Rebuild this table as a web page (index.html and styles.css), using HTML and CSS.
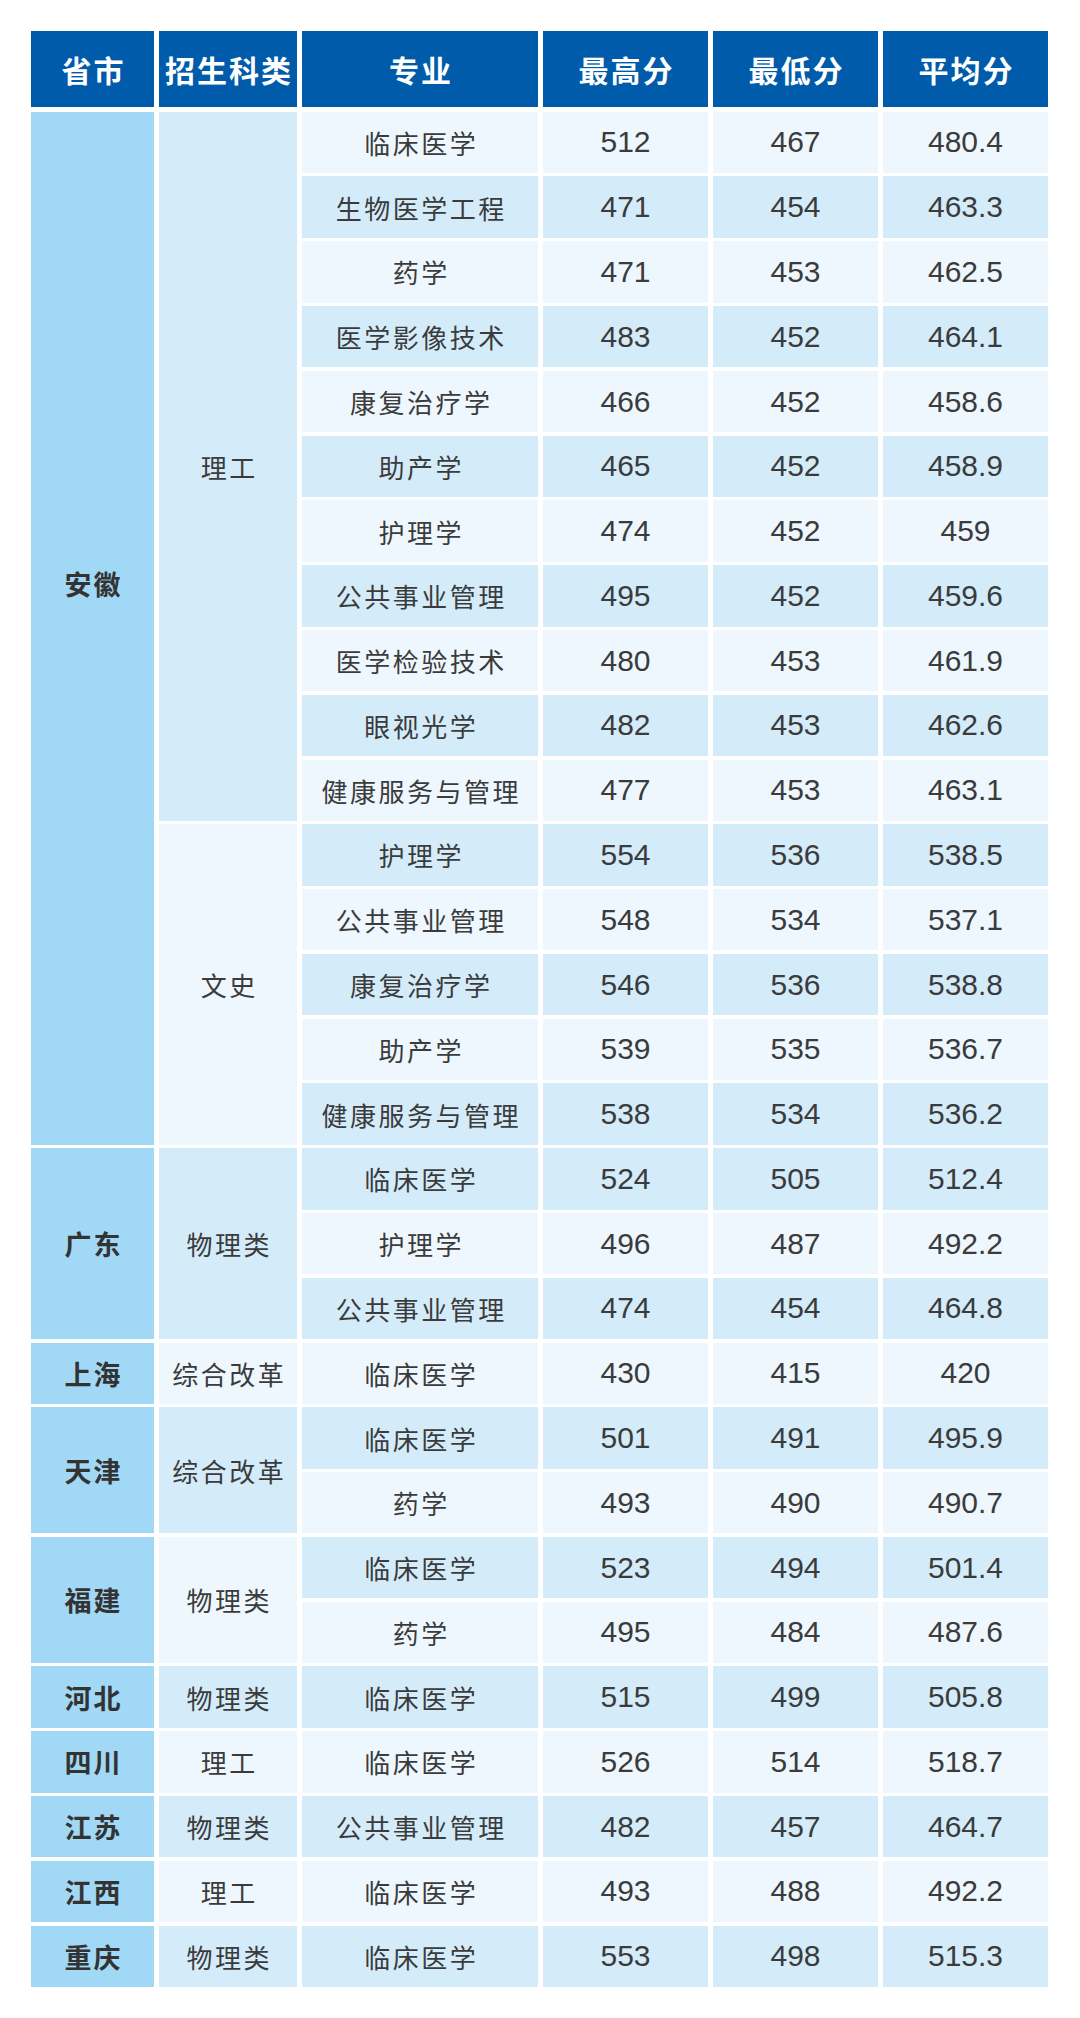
FILE: index.html
```html
<!DOCTYPE html>
<html lang="zh-CN">
<head>
<meta charset="utf-8">
<title>录取分数</title>
<link rel="stylesheet" href="styles.css">
</head>
<body>
<div class="sheet">
  <div class="head">
    <div class="hc">省市</div>
    <div class="hc">招生科类</div>
    <div class="hc">专业</div>
    <div class="hc">最高分</div>
    <div class="hc">最低分</div>
    <div class="hc">平均分</div>
  </div>
  <div class="body">
    <div class="prov s16 raised">安徽</div>
    <div class="cat m s11">理工</div>
    <div class="c t l">临床医学</div><div class="c l">512</div><div class="c l">467</div><div class="c l">480.4</div>
    <div class="c t m">生物医学工程</div><div class="c m">471</div><div class="c m">454</div><div class="c m">463.3</div>
    <div class="c t l">药学</div><div class="c l">471</div><div class="c l">453</div><div class="c l">462.5</div>
    <div class="c t m">医学影像技术</div><div class="c m">483</div><div class="c m">452</div><div class="c m">464.1</div>
    <div class="c t l">康复治疗学</div><div class="c l">466</div><div class="c l">452</div><div class="c l">458.6</div>
    <div class="c t m">助产学</div><div class="c m">465</div><div class="c m">452</div><div class="c m">458.9</div>
    <div class="c t l">护理学</div><div class="c l">474</div><div class="c l">452</div><div class="c l">459</div>
    <div class="c t m">公共事业管理</div><div class="c m">495</div><div class="c m">452</div><div class="c m">459.6</div>
    <div class="c t l">医学检验技术</div><div class="c l">480</div><div class="c l">453</div><div class="c l">461.9</div>
    <div class="c t m">眼视光学</div><div class="c m">482</div><div class="c m">453</div><div class="c m">462.6</div>
    <div class="c t l">健康服务与管理</div><div class="c l">477</div><div class="c l">453</div><div class="c l">463.1</div>
    <div class="cat l s5">文史</div>
    <div class="c t m">护理学</div><div class="c m">554</div><div class="c m">536</div><div class="c m">538.5</div>
    <div class="c t l">公共事业管理</div><div class="c l">548</div><div class="c l">534</div><div class="c l">537.1</div>
    <div class="c t m">康复治疗学</div><div class="c m">546</div><div class="c m">536</div><div class="c m">538.8</div>
    <div class="c t l">助产学</div><div class="c l">539</div><div class="c l">535</div><div class="c l">536.7</div>
    <div class="c t m">健康服务与管理</div><div class="c m">538</div><div class="c m">534</div><div class="c m">536.2</div>

    <div class="prov s3">广东</div>
    <div class="cat m s3">物理类</div>
    <div class="c t m">临床医学</div><div class="c m">524</div><div class="c m">505</div><div class="c m">512.4</div>
    <div class="c t l">护理学</div><div class="c l">496</div><div class="c l">487</div><div class="c l">492.2</div>
    <div class="c t m">公共事业管理</div><div class="c m">474</div><div class="c m">454</div><div class="c m">464.8</div>

    <div class="prov">上海</div>
    <div class="cat l">综合改革</div>
    <div class="c t l">临床医学</div><div class="c l">430</div><div class="c l">415</div><div class="c l">420</div>

    <div class="prov s2">天津</div>
    <div class="cat m s2">综合改革</div>
    <div class="c t m">临床医学</div><div class="c m">501</div><div class="c m">491</div><div class="c m">495.9</div>
    <div class="c t l">药学</div><div class="c l">493</div><div class="c l">490</div><div class="c l">490.7</div>

    <div class="prov s2">福建</div>
    <div class="cat l s2">物理类</div>
    <div class="c t m">临床医学</div><div class="c m">523</div><div class="c m">494</div><div class="c m">501.4</div>
    <div class="c t l">药学</div><div class="c l">495</div><div class="c l">484</div><div class="c l">487.6</div>

    <div class="prov">河北</div>
    <div class="cat m">物理类</div>
    <div class="c t m">临床医学</div><div class="c m">515</div><div class="c m">499</div><div class="c m">505.8</div>

    <div class="prov">四川</div>
    <div class="cat l">理工</div>
    <div class="c t l">临床医学</div><div class="c l">526</div><div class="c l">514</div><div class="c l">518.7</div>

    <div class="prov">江苏</div>
    <div class="cat m">物理类</div>
    <div class="c t m">公共事业管理</div><div class="c m">482</div><div class="c m">457</div><div class="c m">464.7</div>

    <div class="prov">江西</div>
    <div class="cat l">理工</div>
    <div class="c t l">临床医学</div><div class="c l">493</div><div class="c l">488</div><div class="c l">492.2</div>

    <div class="prov">重庆</div>
    <div class="cat m">物理类</div>
    <div class="c t m">临床医学</div><div class="c m">553</div><div class="c m">498</div><div class="c m">515.3</div>
  </div>
</div>
</body>
</html>
```
FILE: styles.css
```css
html, body {
  margin: 0;
  padding: 0;
  background: #ffffff;
}

body {
  font-family: "Liberation Sans", "Noto Sans CJK SC", sans-serif;
  color: #3b3b3b;
}

.sheet {
  width: 1017px;
  margin: 31px 0 0 31px;
}

.head,
.body {
  display: grid;
  grid-template-columns: 123px 138px 236px 165px 165px 165px;
  column-gap: 5px;
}

.head {
  height: 75.7px;
  margin-bottom: 5px;
}

.hc {
  background: #005bab;
  color: #ffffff;
  font-family: "Noto Sans CJK SC", sans-serif;
  font-weight: 700;
  font-size: 30px;
  letter-spacing: 2px;
  padding-left: 2px;
  display: flex;
  align-items: center;
  justify-content: center;
}

.body {
  grid-auto-rows: 61.4px;
  row-gap: 3.4px;
}

.prov,
.cat,
.c {
  display: flex;
  align-items: center;
  justify-content: center;
}

.prov {
  background: #a1d8f5;
  font-family: "Noto Sans CJK SC", sans-serif;
  font-weight: 700;
  font-size: 27px;
  letter-spacing: 2px;
  padding-left: 2px;
  color: #333333;
}

.prov.raised {
  padding-bottom: 90px;
}

.cat {
  font-family: "Noto Sans CJK SC", sans-serif;
  font-size: 26px;
  letter-spacing: 2.5px;
  padding-left: 2.5px;
}

.c {
  font-size: 30px;
}

.c.t {
  font-family: "Noto Sans CJK SC", sans-serif;
  font-size: 26px;
  letter-spacing: 2.5px;
  padding-left: 2.5px;
}

.l { background: #eef7fe; }
.m { background: #d4ecfa; }

.s2 { grid-row: span 2; }
.s3 { grid-row: span 3; }
.s5 { grid-row: span 5; }
.s11 { grid-row: span 11; }
.s16 { grid-row: span 16; }
```
